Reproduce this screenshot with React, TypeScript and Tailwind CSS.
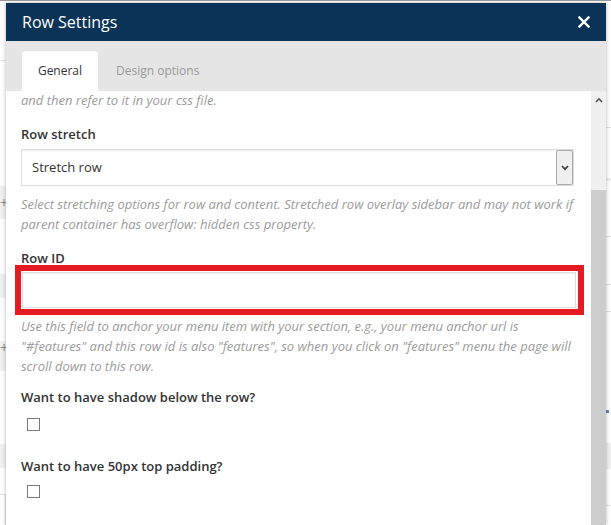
import React from "react";

const font = { fontFamily: '"Open Sans", "Liberation Sans", sans-serif' };

function Checkbox() {
  return <div className="w-[13px] h-[13px] border border-[#7a7a7a] bg-white ml-[6px]" />;
}

function Label({ children }: { children: React.ReactNode }) {
  return <div className="text-[13px] font-semibold text-[#333] leading-[18px]">{children}</div>;
}

function Help({ children }: { children: React.ReactNode }) {
  return <p className="text-[13px] leading-[20px] italic text-[#9b9b9b]">{children}</p>;
}

export default function App() {
  return (
    <div className="relative w-[611px] h-[525px] bg-white overflow-hidden border-t border-[#9a9a9a]" style={font}>
      {/* page behind the modal */}
      <div className="flex h-full">
        <div className="w-[6px] flex flex-col text-[#888] text-[14px] leading-none">
          <div className="mt-[59px] h-px bg-[#e5e5e5]" />
          <div className="mt-[125px] h-[33px] bg-[#f0f0f0] flex items-center">+</div>
          <div className="mt-[55px] h-[24px] bg-[#f0f0f0]" />
          <div className="mt-[43px] h-[30px] bg-[#f0f0f0] flex items-start">+</div>
          <div className="mt-[73px] h-[24px] bg-[#f0f0f0]" />
          <div className="mt-[26px] flex-1 border-t border-r border-[#e2e2e2]" />
        </div>
        <div className="flex-1" />
        <div className="w-[5px] flex flex-col">
          <div className="mt-[126px] h-px bg-[#e2e2e2]" />
          <div className="mt-[50px] h-[3px] bg-[#eeeeee]" />
          <div className="mt-[55px] h-px bg-[#e2e2e2]" />
          <div className="mt-[47px] h-px bg-[#e2e2e2]" />
          <div className="mt-[26px] h-px bg-[#e2e2e2]" />
          <div className="mt-[98px] h-[3px] w-[3px] bg-[#5b8ac7]" />
          <div className="mt-[30px] h-[26px] bg-[#f0f0f0]" />
          <div className="mt-[36px] h-px bg-[#e2e2e2]" />
        </div>
      </div>

      {/* modal */}
      <div className="absolute left-[6px] top-[2px] w-[600px] bottom-0 flex flex-col bg-white shadow-[0_0_4px_rgba(0,0,0,0.3)]">
        <div className="h-[38px] bg-[#0b3358] flex items-center justify-between pl-[16px] pr-[16px]">
          <span className="text-white text-[16px]">Row Settings</span>
          <svg width="12" height="12" viewBox="0 0 12 12">
            <path d="M1.5 1.5 L10.5 10.5 M10.5 1.5 L1.5 10.5" stroke="white" strokeWidth="2.4" strokeLinecap="square" />
          </svg>
        </div>

        <div className="h-[50px] bg-[#e5e5e5] flex items-end pl-[16px]">
          <div className="w-[76px] h-[40px] bg-white rounded-t-[4px] flex items-center justify-center text-[12px] text-[#333]">
            General
          </div>
          <div className="h-[40px] flex items-center pl-[18px] text-[12px] text-[#999]">Design options</div>
        </div>

        <div className="flex flex-1 min-h-0">
          <div className="flex-1 overflow-hidden pl-[15px] pr-[17px] flex flex-col">
            <div className="-mt-[1px]">
              <Help>and then refer to it in your css file.</Help>
            </div>

            <div className="mt-[15px]">
              <Label>Row stretch</Label>
            </div>
            <div className="mt-[6px] h-[37px] border border-[#dddddd] shadow-[inset_0_1px_2px_rgba(0,0,0,0.07)] flex items-center justify-between">
              <span className="pl-[10px] text-[13px] text-[#333]">Stretch row</span>
              <div className="w-[17px] h-[35px] bg-[#f0f0f0] border border-[#a9a9a9] rounded-[2px] flex items-center justify-center">
                <svg width="8" height="6" viewBox="0 0 8 6">
                  <path d="M1 1 L4 4.2 L7 1" stroke="#444" strokeWidth="1.8" fill="none" />
                </svg>
              </div>
            </div>
            <div className="mt-[8px]">
              <Help>
                Select stretching options for row and content. Stretched row overlay sidebar and may not work if parent container has overflow: hidden css property.
              </Help>
            </div>

            <div className="mt-[15px]">
              <Label>Row ID</Label>
            </div>
            <div className="-ml-[6px] -mr-[10px] -mt-[2px] border-[6px] border-[#e51a22] p-px pr-[2px]">
              <div className="h-[36px] border border-[#dddddd] shadow-[inset_0_1px_2px_rgba(0,0,0,0.07)]" />
            </div>
            <div className="mt-px">
              <Help>
                Use this field to anchor your menu item with your section, e.g., your menu anchor url is "#features" and this row id is also "features", so when you click on "features" menu the page will scroll down to this row.
              </Help>
            </div>

            <div className="mt-[12px]">
              <Label>Want to have shadow below the row?</Label>
            </div>
            <div className="mt-[12px]">
              <Checkbox />
            </div>

            <div className="mt-[26px]">
              <Label>Want to have 50px top padding?</Label>
            </div>
            <div className="mt-[10px]">
              <Checkbox />
            </div>
          </div>

          <div className="w-[15px] bg-[#f0f0f0] flex flex-col">
            <div className="h-[17px] flex items-center justify-center">
              <svg width="8" height="6" viewBox="0 0 8 6">
                <path d="M1 5 L4 1.8 L7 5" stroke="#505050" strokeWidth="1.6" fill="none" />
              </svg>
            </div>
            <div className="mt-[82px] flex-1 bg-[#cdcdcd]" />
          </div>
        </div>
      </div>
    </div>
  );
}
